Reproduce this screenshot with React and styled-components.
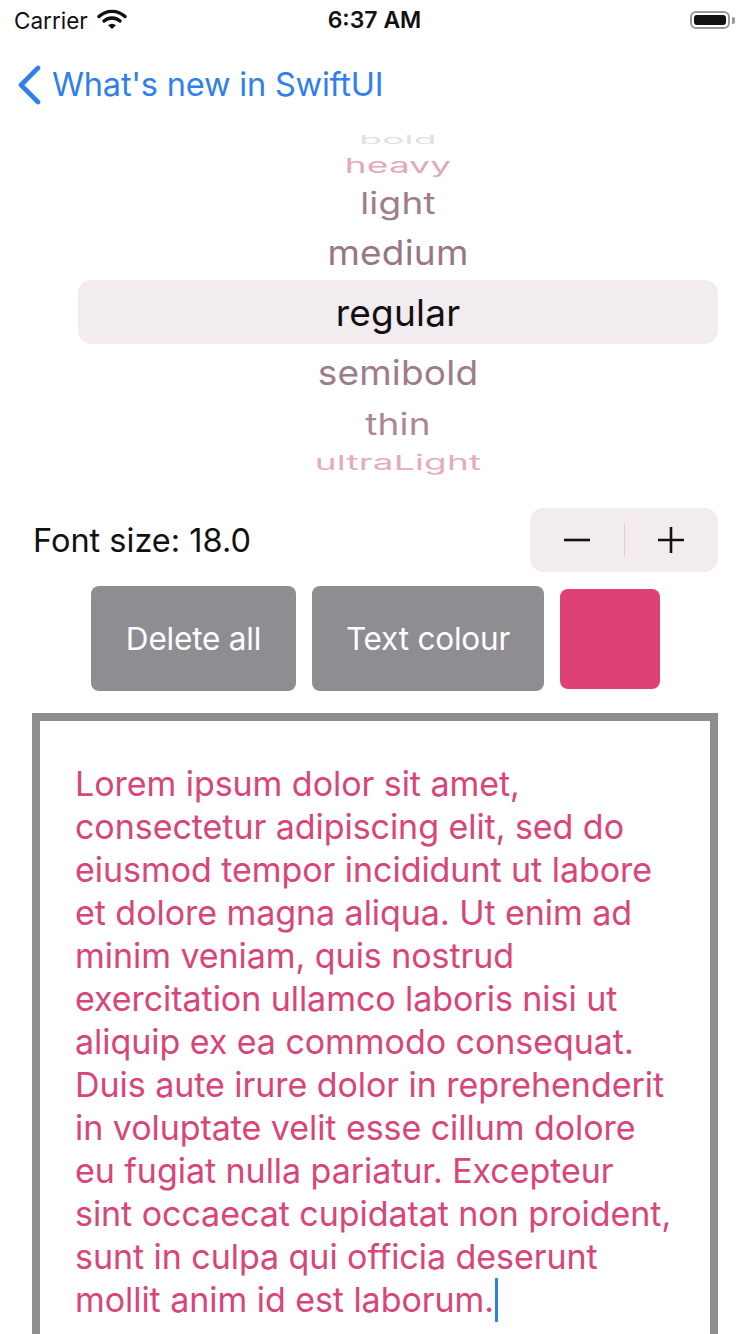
import styled, { createGlobalStyle } from 'styled-components';

const GlobalStyle = createGlobalStyle`
  html, body {
    margin: 0;
    padding: 0;
    background: #ffffff;
  }
  body {
    font-family: Inter, "Liberation Sans", sans-serif;
    overflow: hidden;
  }
`;

const weights = [
  { name: 'bold', h: 22, sy: 0.3, color: '#e9dde3' },
  { name: 'heavy', h: 30, sy: 0.55, color: '#e2a9bd' },
  { name: 'light', h: 44, sy: 0.82, color: '#9f7d8c' },
  { name: 'medium', h: 56, sy: 0.93, color: '#977786' },
  { name: 'regular', h: 64, sy: 1, color: '#111111', selected: true },
  { name: 'semibold', h: 56, sy: 0.93, color: '#9d7c8b' },
  { name: 'thin', h: 46, sy: 0.82, color: '#ad8797' },
  { name: 'ultraLight', h: 32, sy: 0.55, color: '#e7aac0' },
];

const lines = [
  'Lorem ipsum dolor sit amet,',
  'consectetur adipiscing elit, sed do',
  'eiusmod tempor incididunt ut labore',
  'et dolore magna aliqua. Ut enim ad',
  'minim veniam, quis nostrud',
  'exercitation ullamco laboris nisi ut',
  'aliquip ex ea commodo consequat.',
  'Duis aute irure dolor in reprehenderit',
  'in voluptate velit esse cillum dolore',
  'eu fugiat nulla pariatur. Excepteur',
  'sint occaecat cupidatat non proident,',
  'sunt in culpa qui officia deserunt',
];

export default function App() {
  return (
    <>
      <GlobalStyle />
      <Screen>
        <StatusBar>
          <Carrier>
            Carrier
            <svg width="30" height="22" viewBox="0 0 30 22">
              <path d="M2 8.5 A19 19 0 0 1 28 8.5" fill="none" stroke="#111" strokeWidth="3.4" strokeLinecap="round" />
              <path d="M7 13 A12 12 0 0 1 23 13" fill="none" stroke="#111" strokeWidth="3.4" strokeLinecap="round" />
              <path d="M11 17.2 L15 21 L19 17.2 A6 6 0 0 0 11 17.2 Z" fill="#111" />
            </svg>
          </Carrier>
          <Clock>6:37 AM</Clock>
          <Battery>
            <BatteryBody>
              <BatteryLevel />
            </BatteryBody>
            <BatteryNub />
          </Battery>
        </StatusBar>

        <NavBar>
          <svg width="26" height="40" viewBox="0 0 26 40">
            <path d="M22 3 L5 20 L22 37" fill="none" stroke="#2f80ed" strokeWidth="4.6" strokeLinecap="round" strokeLinejoin="round" />
          </svg>
          <BackLabel>What's new in SwiftUI</BackLabel>
        </NavBar>

        <Wheel>
          {weights.map((w) => (
            <WheelRow key={w.name} $h={w.h} $selected={w.selected}>
              <WheelText $sy={w.sy} $color={w.color}>{w.name}</WheelText>
            </WheelRow>
          ))}
        </Wheel>

        <SizeRow>
          <SizeLabel>Font size: 18.0</SizeLabel>
          <Stepper>
            <StepButton>
              <svg width="30" height="30" viewBox="0 0 30 30">
                <path d="M2 15 H28" stroke="#111" strokeWidth="2.6" />
              </svg>
            </StepButton>
            <StepDivider />
            <StepButton>
              <svg width="30" height="30" viewBox="0 0 30 30">
                <path d="M2 15 H28 M15 2 V28" stroke="#111" strokeWidth="2.6" />
              </svg>
            </StepButton>
          </Stepper>
        </SizeRow>

        <ButtonRow>
          <GrayButton $w={205}>Delete all</GrayButton>
          <GrayButton $w={232}>Text colour</GrayButton>
          <Swatch />
        </ButtonRow>

        <Editor>
          {lines.map((l) => (
            <Line key={l}>{l}</Line>
          ))}
          <Line>
            mollit anim id est laborum.<Caret />
          </Line>
        </Editor>
      </Screen>
    </>
  );
}

const Screen = styled.div`
  width: 750px;
  height: 1334px;
  overflow: hidden;
  display: flex;
  flex-direction: column;
`;

const StatusBar = styled.div`
  height: 40px;
  display: flex;
  align-items: center;
  justify-content: space-between;
  padding: 0 15px 0 14px;
`;

const Carrier = styled.div`
  width: 200px;
  display: flex;
  align-items: center;
  gap: 9px;
  font-size: 22.5px;
  color: #111;
  svg {
    margin-top: -2px;
  }
`;

const Clock = styled.div`
  font-size: 23px;
  font-weight: 600;
  color: #111;
`;

const Battery = styled.div`
  width: 200px;
  display: flex;
  justify-content: flex-end;
  align-items: center;
  gap: 2px;
`;

const BatteryBody = styled.div`
  width: 40px;
  height: 18px;
  box-sizing: border-box;
  border: 2px solid #9a9a9a;
  border-radius: 6px;
  padding: 2px;
`;

const BatteryLevel = styled.div`
  width: 100%;
  height: 100%;
  background: #111;
  border-radius: 3px;
`;

const BatteryNub = styled.div`
  width: 3px;
  height: 7px;
  background: #9a9a9a;
  border-radius: 0 2px 2px 0;
`;

const NavBar = styled.div`
  height: 88px;
  display: flex;
  align-items: center;
  padding-left: 16px;
  gap: 10px;
  svg {
    margin-top: 2px;
  }
`;

const BackLabel = styled.div`
  font-size: 32.5px;
  color: #2f80ed;
  letter-spacing: -0.2px;
`;

const Wheel = styled.div`
  height: 350px;
  display: flex;
  flex-direction: column;
  align-items: center;
  justify-content: flex-start;
  padding: 0 32px 0 78px;
`;

const WheelRow = styled.div`
  width: 100%;
  height: ${(p) => p.$h}px;
  flex: none;
  display: flex;
  align-items: center;
  justify-content: center;
  border-radius: 14px;
  background: ${(p) => (p.$selected ? '#f2ebf0' : 'transparent')};
`;

const WheelText = styled.span`
  font-size: 37px;
  color: ${(p) => p.$color};
  transform: scaleY(${(p) => p.$sy});
  line-height: 1;
  letter-spacing: 0.2px;
`;

const SizeRow = styled.div`
  display: flex;
  align-items: center;
  justify-content: space-between;
  padding: 0 32px 0 33px;
  margin-top: 30px;
`;

const SizeLabel = styled.div`
  font-size: 32.5px;
  color: #111;
  letter-spacing: 0;
`;

const Stepper = styled.div`
  width: 188px;
  height: 64px;
  border-radius: 14px;
  background: #f2ebf0;
  display: flex;
  align-items: center;
`;

const StepButton = styled.div`
  flex: 1;
  display: flex;
  justify-content: center;
  align-items: center;
`;

const StepDivider = styled.div`
  width: 1px;
  height: 34px;
  background: #edc4d3;
`;

const ButtonRow = styled.div`
  display: flex;
  align-items: center;
  gap: 16px;
  padding-left: 91px;
  margin-top: 14px;
`;

const GrayButton = styled.div`
  width: ${(p) => p.$w}px;
  height: 105px;
  border-radius: 8px;
  background: #8e8d92;
  color: #ffffff;
  font-size: 31.5px;
  letter-spacing: -0.2px;
  display: flex;
  align-items: center;
  justify-content: center;
`;

const Swatch = styled.div`
  width: 100px;
  height: 100px;
  border-radius: 8px;
  background: #df4078;
`;

const Editor = styled.div`
  margin: 22px 32px 0 32px;
  border: 8px solid #8e8d92;
  border-bottom: none;
  padding: 41px 20px 0 35px;
  flex: 1;
  color: #d9457a;
  font-size: 34px;
  line-height: 43px;
`;

const Line = styled.div`
  white-space: nowrap;
  letter-spacing: -0.05px;
`;

const Caret = styled.span`
  display: inline-block;
  width: 3px;
  height: 44px;
  background: #2f80ed;
  vertical-align: middle;
  margin-left: 1px;
  margin-top: -6px;
`;
